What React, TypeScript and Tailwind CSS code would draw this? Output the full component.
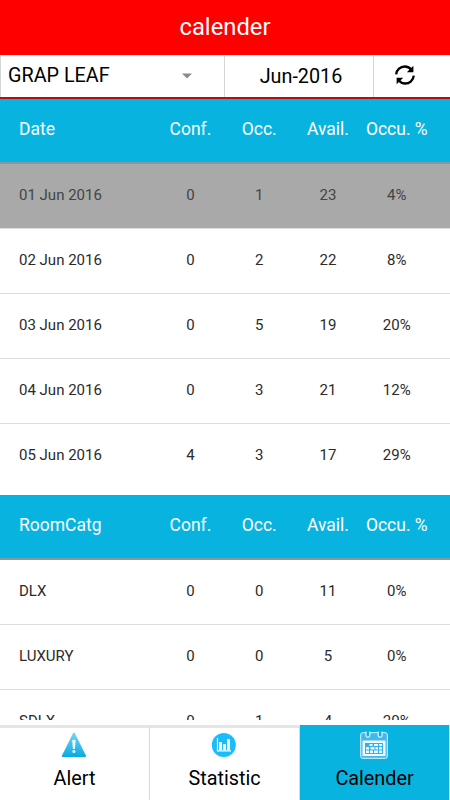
import clsx from "clsx";

const days = [
  { name: "01 Jun 2016", conf: 0, occ: 1, avail: 23, rate: "4%" },
  { name: "02 Jun 2016", conf: 0, occ: 2, avail: 22, rate: "8%" },
  { name: "03 Jun 2016", conf: 0, occ: 5, avail: 19, rate: "20%" },
  { name: "04 Jun 2016", conf: 0, occ: 3, avail: 21, rate: "12%" },
  { name: "05 Jun 2016", conf: 4, occ: 3, avail: 17, rate: "29%" },
];

const rooms = [
  { name: "DLX", conf: 0, occ: 0, avail: 11, rate: "0%" },
  { name: "LUXURY", conf: 0, occ: 0, avail: 5, rate: "0%" },
  { name: "SDLX", conf: 0, occ: 1, avail: 4, rate: "20%" },
];

type Row = (typeof days)[number];

const columns = "grid grid-cols-[137px_68.8px_68.8px_68.8px_68.8px] items-center pl-[19px] text-center";

function TableHead({ title }: { title: string }) {
  return (
    <div
      className={clsx(
        columns,
        "h-[65px] shrink-0 border-b-2 border-[#8299a2] bg-[#08b4df] pb-0.5 text-[17.5px] text-white",
      )}
    >
      <span className="text-left">{title}</span>
      <span>Conf.</span>
      <span>Occ.</span>
      <span>Avail.</span>
      <span>Occu. %</span>
    </div>
  );
}

function TableRow({ row, selected = false }: { row: Row; selected?: boolean }) {
  return (
    <div
      className={clsx(
        columns,
        "h-[65px] shrink-0 border-b border-[#dedede] pb-0.5 text-[15px]",
        selected ? "bg-[#a9a9a9] text-[#444]" : "bg-white text-[#2b2b2b]",
      )}
    >
      <span className="text-left">{row.name}</span>
      <span>{row.conf}</span>
      <span>{row.occ}</span>
      <span>{row.avail}</span>
      <span>{row.rate}</span>
    </div>
  );
}

function RefreshIcon() {
  return (
    <svg width="20" height="20" viewBox="0 0 20 20" fill="none">
      <path d="M1.2 9.3C1.7 4.8 5.3 1.5 9.8 1.5c2.8 0 5 1.2 6.6 3.2" stroke="#000" strokeWidth="2.3" />
      <path d="M18.4.8v6.5h-6.6z" fill="#000" />
      <path d="M18.8 10.7c-.5 4.5-4.1 7.8-8.6 7.8-2.8 0-5-1.2-6.6-3.2" stroke="#000" strokeWidth="2.3" />
      <path d="M1.6 19.2v-6.5h6.6z" fill="#000" />
    </svg>
  );
}

function AlertIcon() {
  return (
    <svg width="28" height="28" viewBox="0 0 28 28">
      <defs>
        <linearGradient id="alert-fill" x1="0" y1="0" x2="0" y2="1">
          <stop offset="0" stopColor="#78d5f5" />
          <stop offset="1" stopColor="#08a9e2" />
        </linearGradient>
      </defs>
      <path d="M13.1 2q.8-1.2 1.6 0L26 24.7q.2 1.3-.8 1.3H2.8q-1.1 0-.9-1.3z" fill="url(#alert-fill)" />
      <path d="M12.2 9.2q1.700-.8 3.4 0l-.7 8.8h-2z" fill="#f3fbfe" />
      <circle cx="13.9" cy="20.6" r="1.5" fill="#f3fbfe" />
    </svg>
  );
}

function StatisticIcon() {
  return (
    <svg width="28" height="28" viewBox="0 0 28 28">
      <circle cx="13.8" cy="14" r="12" fill="#1abdfb" />
      <path d="M7.5 7v12.8H21" fill="none" stroke="#fff" strokeWidth="1.2" />
      <path d="M9 11h3v8H9zM13 13h3v6h-3zM17 8h3v11h-3z" fill="#f4fcff" />
    </svg>
  );
}

function CalendarIcon() {
  return (
    <svg width="28" height="28" viewBox="0 0 28 28" fill="none">
      <rect x=".7" y="1.7" width="26.6" height="25.6" rx="2" fill="#45b7ef" stroke="#d9f4fc" />
      <path d="M2.5 9.5h23V25h-23z" fill="#f0faff" />
      <path d="M5 12h18v11H5z" fill="#30b2e8" />
      <path
        d="M9.5 13h3v2h-3zM14 13h4v2h-4zM19 13h3v2h-3zM6 16h3v2.5H6zM10.5 16h4v2.5h-4zM15.5 16H18v2.5h-2.5zM19 16h3v2.5h-3zM6 19.5h3V22H6zM10 19.5h3V22h-3zM14 19.5h4V22h-4zM19 19.5h3V22h-3z"
        fill="#f0faff"
      />
      <path
        d="M6 .5v4q0 1.7 1.9 1.7t1.9-1.7v-4M18.2.5v4q0 1.7 1.9 1.7T22 4.5v-4"
        fill="#08b4df"
        stroke="#d9f4fc"
        strokeWidth="1.2"
      />
    </svg>
  );
}

const tabs = [
  { label: "Alert", icon: AlertIcon, active: false },
  { label: "Statistic", icon: StatisticIcon, active: false },
  { label: "Calender", icon: CalendarIcon, active: true },
];

export default function App() {
  return (
    <div className="flex h-[800px] w-[450px] flex-col overflow-hidden bg-white font-[Roboto,sans-serif] text-black">
      <header className="flex h-[55px] shrink-0 items-center justify-center bg-[#f00] text-[23.8px] text-white">
        calender
      </header>

      <div className="flex h-11 shrink-0 border-t border-b-2 border-t-[#eee] border-b-[#b70d17] text-[19.8px]">
        <button
          type="button"
          className="flex w-[225px] items-center justify-between border-x border-[#d5d5d5] pr-8 pb-px pl-[7px]"
        >
          <span>GRAP LEAF</span>
          <svg width="10" height="6" viewBox="0 0 10 6">
            <path d="M0 .5h10L5 5.5z" fill="#8b8b8b" />
          </svg>
        </button>
        <button type="button" className="flex w-[149px] items-center justify-center border-r border-[#d5d5d5] pt-px pl-1">
          Jun-2016
        </button>
        <button type="button" aria-label="Refresh" className="flex flex-1 items-center pb-[3px] pl-[21px]">
          <RefreshIcon />
        </button>
      </div>

      <main className="flex h-[621px] shrink-0 flex-col overflow-hidden">
        <TableHead title="Date" />
        <div className="flex h-[331px] shrink-0 flex-col overflow-hidden [&>:last-child]:border-white">
          {days.map((row, index) => (
            <TableRow key={row.name} row={row} selected={index === 0} />
          ))}
        </div>
        <TableHead title="RoomCatg" />
        {rooms.map((row) => (
          <TableRow key={row.name} row={row} />
        ))}
      </main>

      <div className="h-[5px] shrink-0" />
      <nav className="grid h-[75px] shrink-0 grid-cols-3">
        {tabs.map(({ label, icon: Icon, active }) => (
          <button
            key={label}
            type="button"
            className={clsx(
              "flex flex-col items-center border-r border-[#d8d8d8] pr-px text-[19.8px]",
              active ? "bg-[#08b4df] pt-1.5" : "border-t-[3px] border-t-[#e5e5e5] pt-[3px]",
            )}
          >
            <Icon />
            <span className="mt-1.5 pl-px leading-7">{label}</span>
          </button>
        ))}
      </nav>
    </div>
  );
}
